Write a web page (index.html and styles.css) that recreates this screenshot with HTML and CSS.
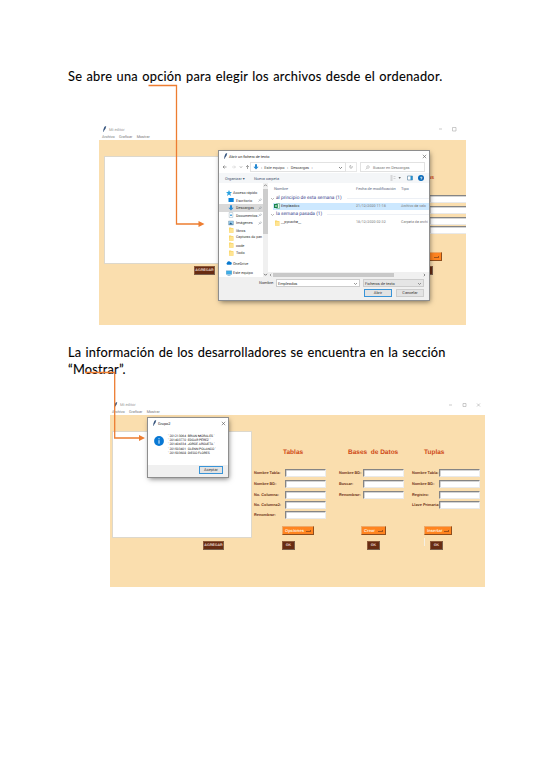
FILE: index.html
```html
<!DOCTYPE html>
<html lang="es">
<head>
<meta charset="utf-8">
<title>Manual de usuario</title>
<link rel="stylesheet" href="styles.css">
</head>
<body>
<svg width="0" height="0" class="defs">
<symbol id="feather" viewBox="0 0 5 7"><path d="M1 7 1.2 4 2.5 1 4.5 0 3.8 3 2 5.5 1.4 7Z" fill="#35537c"/></symbol>
<symbol id="pin" viewBox="0 0 5 5"><path d="M.6 4.5 2 3M1.4 2.2l1.5 1.5M2 2.3 3.3 1l1 1L3 3.3" fill="none" stroke="#78838e" stroke-width=".6"/></symbol>
<symbol id="folder" viewBox="0 0 6 6"><path d="M1 .4h2l.5.6H5.400v4.700H1Z" fill="#f9d66b"/><path d="M1.8 1.8H5.400v3.900H1Z" fill="#ffe492"/></symbol>
<symbol id="down" viewBox="0 0 6 6"><path d="M2 .3h2v2.400h1.600L3 5.600.4 2.700H2Z" fill="#2589d2"/></symbol>
</svg>
<main class="page">
<p class="lead one">Se abre una opción para elegir los archivos desde el ordenador.</p>

<section class="win first">
<header class="bar"><svg class="fe"><use href="#feather"/></svg><span class="name">Mi editor</span><span class="ctl"><svg viewBox="0 0 32 6"><path d="M0 3h3M13.500 1.500h3.500v3.500h-3.500Z" fill="none" stroke="#aaa" stroke-width=".6"/></svg></span></header>
<nav class="menu"><span>Archivo</span><span>Graficar</span><span>Mostrar</span></nav>
<div class="canvas">
<div class="left"><div class="editor"></div><b class="dark agregar">AGREGAR</b></div>
<div class="peek"><b class="head">as</b><i class="field"></i><i class="field"></i><i class="field"></i><i class="field"></i><b class="drop"><span></span><i></i></b><b class="dark"></b></div>
</div>
<div class="dialog open">
<header class="dtitle"><svg class="fe"><use href="#feather"/></svg><span>Abrir un fichero de texto</span><svg class="x" viewBox="0 0 5 5"><path d="m.8.8 3.400 3.400m0-3.400L.8 4.200" stroke="#555" stroke-width=".6"/></svg></header>
<div class="address">
<svg class="arrows" viewBox="0 0 29 8"><g fill="none" stroke="#666" stroke-width=".6"><path d="M5.500 4H2m1.500-1.500L2 4l1.500 1.500"/><path stroke="#ccc" d="M11 4h3.500M13 2.500 14.500 4 13 5.500"/><path d="m19 3.500 1 1 1-1M26.500 6V2.500M25 4l1.500-1.500L28 4"/></g></svg>
<div class="path"><svg class="ic"><use href="#down"/></svg><span class="sep">›</span><span class="p1">Este equipo</span><span class="sep wide">›</span><span class="p2">Descargas</span><span class="sep wide">›</span><svg class="chev" viewBox="0 0 5 5"><path d="m1 2 1.500 1.500L4 2" fill="none" stroke="#555" stroke-width=".7"/></svg></div>
<div class="refresh"><svg viewBox="0 0 5 5"><path d="M3.500 1.200A1.600 1.600 0 1 1 1.500 1.200M1 .7h1v1" fill="none" stroke="#555" stroke-width=".5"/></svg></div>
<div class="search"><svg viewBox="0 0 5 5"><circle cx="3" cy="2" r="1.300" fill="none" stroke="#888" stroke-width=".4"/><path d="M2 3 .7 4.400" stroke="#888" stroke-width=".4"/></svg><span>Buscar en Descargas</span></div>
</div>
<div class="tools"><span class="org">Organizar ▾</span><span class="new">Nueva carpeta</span><svg viewBox="0 0 40 8"><path d="M1.500 2h2M1.500 4h2M1.500 6h2" stroke="#aaa" stroke-width=".8"/><path d="M4.500 2.500h2M4.500 4.500h2" stroke="#ccc" stroke-width=".8"/><path d="m9.500 3.300 1.200 1.500 1.200-1.500Z" fill="#444"/><path d="M18.500 2h5v4h-5Z" fill="#fff" stroke="#668ba8" stroke-width=".7"/><path d="M21.500 2h2v4h-2Z" fill="#2790ce"/><circle cx="32" cy="4" r="3" fill="#0868b8"/><text x="32" y="5.700" class="q">?</text></svg></div>
<div class="browse">
<ul class="tree">
<li class="top"><svg viewBox="0 0 6 6"><path d="m3 0 .9 2H6L4.300 3.400 5 6 3 4.500 1 6l.7-2.600L0 2h2.100Z" fill="#29a1e0"/></svg><span>Acceso rápido</span></li>
<li><svg viewBox="0 0 6 6"><path d="M.5 1h5.200v4H.5Z" fill="#0a83db"/></svg><span>Escritorio</span><svg class="pin"><use href="#pin"/></svg></li>
<li class="on"><svg><use href="#down"/></svg><span>Descargas</span><svg class="pin"><use href="#pin"/></svg></li>
<li><svg viewBox="0 0 6 6"><path d="M1.200.5h3.600v5H1.200Z" fill="#fff" stroke="#9cb2bf" stroke-width=".5"/><path d="M2 2.500h2v1.500H2Z" fill="#55a8df"/></svg><span>Documentos</span><svg class="pin"><use href="#pin"/></svg></li>
<li><svg viewBox="0 0 6 6"><path d="M.5 1h5v4h-5Z" fill="#9acced" stroke="#7890a0" stroke-width=".4"/><path d="m1 4.500 1.500-2 2.500 2Z" fill="#275b84"/></svg><span>Imágenes</span><svg class="pin"><use href="#pin"/></svg></li>
<li><svg><use href="#folder"/></svg><span>libros</span></li>
<li><svg><use href="#folder"/></svg><span class="cut">Capturas de pan</span></li>
<li><svg><use href="#folder"/></svg><span>code</span></li>
<li><svg><use href="#folder"/></svg><span>Todo</span></li>
<li class="top cloud"><svg viewBox="0 0 6 6"><path d="M1.300 4.800A1.200 1.200 0 0 1 1 2.700a2 2 0 0 1 3.500-.6 1.400 1.400 0 0 1 .4 2.700Z" fill="#0879cf"/></svg><span>OneDrive</span></li>
<li class="top pc"><svg viewBox="0 0 6 6"><path d="M.2.8h5.600v3.500H.2Z" fill="#3daee9" stroke="#528fb8" stroke-width=".4"/><path d="M1.500 5.400h3" stroke="#528fb8" stroke-width=".6"/></svg><span>Este equipo</span></li>
</ul>
<div class="vscroll"><svg viewBox="0 0 5 5"><path d="m1 3.200 1.500-1.500L4 3.200" fill="none" stroke="#666" stroke-width=".7"/></svg><i></i><svg viewBox="0 0 5 5"><path d="m1 1.800 1.500 1.500L4 1.800" fill="none" stroke="#444" stroke-width=".7"/></svg></div>
<div class="files">
<div class="cols row"><span>Nombre</span><span>Fecha de modificación</span><span>Tipo</span></div>
<h4><svg viewBox="0 0 5 5"><path d="m1 2 1.500 1.500L4 2" fill="none" stroke="#777" stroke-width=".5"/></svg><span>al principio de esta semana (1)</span><i></i></h4>
<div class="row sel"><span><svg viewBox="0 0 6 6"><path d="M2.500.5h3v5h-3Z" fill="#e4f5eb" stroke="#50a575" stroke-width=".5"/><path d="M0 1h3.800v4H0Z" fill="#16834b"/><path d="m1 2 2 2m0-2L1 4" stroke="#fff" stroke-width=".5"/></svg>Empleados</span><span>21/12/2020 11:18</span><span>Archivo de valo</span></div>
<h4><svg viewBox="0 0 5 5"><path d="m1 2 1.500 1.500L4 2" fill="none" stroke="#777" stroke-width=".5"/></svg><span class="g2">la semana pasada (1)</span><i></i></h4>
<div class="row"><span><svg><use href="#folder"/></svg>__pycache__</span><span>18/12/2020 02:32</span><span>Carpeta de archi</span></div>
<div class="hscroll"><svg viewBox="0 0 4 4"><path d="M2.700.8 1.500 2l1.200 1.200" fill="none" stroke="#666" stroke-width=".6"/></svg><i></i><svg viewBox="0 0 4 4"><path d="M1.300.8 2.500 2 1.300 3.200" fill="none" stroke="#444" stroke-width=".6"/></svg></div>
</div>
</div>
<footer class="pick">
<label>Nombre:</label><div class="combo">Empleados<svg viewBox="0 0 5 5"><path d="m1 2 1.500 1.500L4 2" fill="none" stroke="#555" stroke-width=".6"/></svg></div><div class="combo gray">Ficheros de texto<svg viewBox="0 0 5 5"><path d="m1 2 1.500 1.500L4 2" fill="none" stroke="#555" stroke-width=".6"/></svg></div>
<div class="acts"><span class="btn focus">Abrir</span><span class="btn">Cancelar</span></div>
</footer>
</div>
</section>

<p class="lead two">La información de los desarrolladores se encuentra en la sección<br><span class="w2">“Mostrar”.</span></p>

<section class="win second">
<header class="bar"><svg class="fe"><use href="#feather"/></svg><span class="name">Mi editor</span><span class="ctl"><svg viewBox="0 0 32 6"><path d="M0 3h3M14 1.500h3v3h-3ZM28 1.500l3 3m0-3-3 3" fill="none" stroke="#aaa" stroke-width=".6"/></svg></span></header>
<nav class="menu"><span>Archivo</span><span>Graficar</span><span>Mostrar</span></nav>
<div class="canvas">
<div class="left"><div class="editor"></div><b class="dark agregar">AGREGAR</b></div>
<div class="form f1"><b class="head">Tablas</b>
<div class="fields"><label>Nombre Tabla:</label><i class="field"></i><label>Nombre BD:</label><i class="field"></i><label>No. Columna:</label><i class="field"></i><label>No. Columna2:</label><i class="field"></i><label>Renombrar:</label><i class="field"></i></div>
<b class="drop"><span>Opciones</span><i></i></b><b class="dark ok">OK</b></div>
<div class="form f2"><b class="head">Bases &nbsp;de Datos</b>
<div class="fields"><label>Nombre BD:</label><i class="field"></i><label>Buscar:</label><i class="field"></i><label>Renombrar:</label><i class="field"></i></div>
<b class="drop"><span>Crear</span><i></i></b><b class="dark ok">OK</b></div>
<div class="form f3"><b class="head">Tuplas</b>
<div class="fields"><label>Nombre Tabla:</label><i class="field"></i><label>Nombre BD:</label><i class="field"></i><label>Registro:</label><i class="field"></i><label>Llave Primaria:</label><i class="field"></i></div>
<b class="drop"><span>Insertar</span><i></i></b><div class="end"><i></i><b class="dark ok">OK</b></div></div>
</div>
<div class="dialog about">
<header class="dtitle"><svg class="fe"><use href="#feather"/></svg><span>Grupo2</span><svg class="x" viewBox="0 0 5 5"><path d="m.8.8 3.400 3.400m0-3.400L.8 4.200" stroke="#555" stroke-width=".6"/></svg></header>
<div class="msg"><svg viewBox="0 0 10 10"><circle cx="5" cy="5" r="4.900" fill="#0878d4"/><path d="M5 4.200v3.500M5 2.200v1.100" stroke="#fff" stroke-width=".9"/></svg>
<div class="people"><span>' 201213064 &nbsp;BRIAN MORALES '</span><span>' 201403770 &nbsp;EDGAR PÉREZ '</span><span>' 201404334 &nbsp;JORGE ARGUETA '</span><span>' 201503401 &nbsp;GLENN POLANCO '</span><span>' 201503608 &nbsp;DIEGO FLORES</span></div></div>
<footer><span class="btn focus">Aceptar</span></footer>
</div>
</section>
<svg class="callouts" viewBox="0 0 560 767"><g fill="none" stroke="#ed7d31" stroke-width="1.300"><path d="M148.500 85.500H176.500V224H200M85 372.500H114.700V438H140"/></g><path d="M198.500 221 204.500 224 198.500 227ZM139 435 145 438 139 441Z" fill="#ed7d31"/></svg>
</main>
</body>
</html>
```

FILE: styles.css
```css
* { box-sizing: border-box; }
body { margin: 0; background: #fff; }
.defs { position: absolute; }
.page { position: relative; width: 560px; height: 767px; padding-top: 66px; overflow: hidden; font: 4px/5px Roboto, sans-serif; color: #333; text-rendering: geometricPrecision; }
.page span, label { white-space: nowrap; }
.lead { margin: 0 0 0 68px; font: 12.800px/17px Lato, sans-serif; color: #000; white-space: nowrap; text-rendering: auto; -webkit-text-stroke: .1px #000; }
.one { height: 59px; padding-top: 2px; letter-spacing: .25px; word-spacing: .800px; }
.two { height: 76px; padding-top: 19px; letter-spacing: .2px; word-spacing: .700px; }
.callouts { position: absolute; inset: 0; width: 560px; height: 767px; }

.win { position: relative; display: flex; flex-direction: column; }
.first { margin-left: 99px; width: 367px; height: 200px; }
.second { margin-left: 110px; width: 375px; height: 186px; }
.bar { display: flex; align-items: center; height: 8px; padding-left: 3px; color: #999; }
.second .bar { height: 7px; }
.fe { width: 5px; height: 6px; margin-right: 2px; flex: none; }
.ctl { margin-left: auto; width: 32px; height: 6px; display: flex; }
.first .ctl { margin-right: -5px; }
.ctl svg { width: 32px; height: 6px; }
.second .ctl { margin-right: 4px; }
.menu { display: flex; gap: 4.300px; height: 7px; padding-left: 3px; line-height: 7px; color: #777; font-size: 3.800px; }
.second .menu { padding-left: 2px; }
.canvas { display: flex; flex: 1; min-height: 0; background: #fadeae; }
.left { width: 142px; display: flex; flex-direction: column; }
.first .left { width: 330px; padding-left: 5px; }
.second .left { padding-left: 2px; }
.editor { background: #fff; border: 1px solid #ddd8cc; flex: none; }
.first .editor { width: 142px; height: 108px; margin-top: 16px; }
.second .editor { width: 140px; height: 107px; margin-top: 16px; }
.dark { display: block; height: 9px; width: 21px; background: #682c12; border: 1px solid; border-color: #8e5a39 #79604d #79604d #8e5a39; color: #ead9d0; font: bold 3.600px/7px "Liberation Sans", sans-serif; text-align: center; }
.first .agregar { margin: 2px 0 0 90px; }
.second .agregar { margin: 3px 0 0 91px; }
.head { display: block; color: #cf4a16; font: bold 6.500px/8px "Liberation Sans", sans-serif; white-space: nowrap; }
.field { display: block; width: 41px; height: 8px; background: #fff; border: 1px solid; border-width: 1px; border-color: #858585 #eee #e9e9e9 #858585; box-shadow: inset .5px .5px 0 #aaa; }
.drop { display: flex; align-items: center; justify-content: space-between; height: 9px; background: #ff8420; border: 1px solid; border-color: #edaa6a #8e4e1e #8e4e1e #edaa6a; padding: 0 2px; color: #ffecd8; font: bold 4.200px/7px "Liberation Sans", sans-serif; }
.drop i { width: 5px; height: 2px; border: 1px solid #a3551a; border-width: 0 1px 1px 0; }
.peek { display: flex; flex-direction: column; width: 37px; overflow: hidden; }
.peek .head { margin: 34px 0 13px; height: 8px; font-size: 5.500px; margin-left: -1px; }
.peek .field { width: 43px; flex: none; margin-bottom: 3px; height: 8px; }
.peek .field:nth-of-type(4) { margin-top: -2px; }
.peek .drop { width: 13px; margin-top: 15px; }
.peek .dark { width: 4px; margin-top: 5px; }

.form { padding-top: 34px; }
.f1 { width: 85px; padding-left: 2px; }
.f2 { width: 73px; padding-left: 2px; }
.f3 { width: 75px; padding-left: 2px; }
.fields { display: grid; align-content: start; grid-template-columns: 31px 41px; grid-template-rows: 11px 11px 10px 9.500px 9px; height: 57px; margin-top: 12px; }
.fields label { color: #6e3316; font: bold 3.850px/8px "Liberation Sans", sans-serif; }
.f1 .head { padding-left: 29px; }
.f2 .head { padding-left: 9px; }
.f3 .head { padding-left: 12px; }
.f2 .fields { grid-template-columns: 24px 41px; }
.f3 .fields { grid-template-columns: 27px 41px; }
.f1 .drop { width: 32px; margin-left: 28px; }
.f2 .drop { width: 25px; margin-left: 22px; }
.f3 .drop { width: 28px; margin-left: 12px; }
.ok { width: 13px; margin-top: 6px; }
.f1 .ok { margin-left: 28px; }
.f2 .ok { margin-left: 28px; }
.end { display: flex; padding-left: 12px; }
.end i { width: 1px; height: 8px; margin-top: 3px; background: #f4efe4; }
.end .ok { margin-left: 5px; }

.dialog { position: absolute; background: #fff; outline: .5px solid #8e8e8e; box-shadow: 1px 2px 5px rgba(0,0,0,.5); display: flex; flex-direction: column; }
.open { left: 120px; top: 26px; width: 210px; height: 149px; }
.dtitle { display: flex; align-items: center; height: 10px; padding: 0 2px 0 4px; color: #222; font-size: 3.800px; flex: none; }
.dtitle .fe { margin-right: 1px; }
.x { width: 5px; height: 5px; margin-left: auto; }
.address { display: flex; height: 12px; padding: 1px 0 1px 2px; flex: none; color: #444; font-size: 3.900px; }
.arrows { width: 29px; height: 10px; }
.path { display: flex; align-items: center; width: 96px; border: .5px solid #e2e2e2; padding: 0 2px; }
.ic { width: 6px; height: 6px; }
.sep { margin: 0 2px; }
.wide { margin: 0 2.500px; }
.chev { width: 5px; height: 5px; margin-left: auto; }
.refresh { width: 11px; border: 1px solid #e8e8e8; border-left: 0; display: flex; padding: 1px 3px; }
.refresh svg { width: 5px; height: 6px; }
.search { display: flex; align-items: center; gap: 3px; width: 65px; margin-left: 3px; padding-left: 4px; border: 1px solid #e2e2e2; color: #777; }
.search svg { width: 5px; height: 5px; }
.tools { display: flex; align-items: center; height: 10px; background: #f4f6f8; padding-left: 6px; color: #45536e; font-size: 3.900px; flex: none; }
.org { width: 29px; }
.tools svg { width: 40px; height: 8px; margin-left: auto; }
.q { font-size: 4.500px; font-weight: bold; text-anchor: middle; fill: #fff; }
.browse { display: flex; height: 94px; flex: none; }
.tree { margin: 0; padding: 6px 0 0; width: 44px; list-style: none; overflow: hidden; font-size: 3.800px; }
.tree li { display: flex; align-items: center; height: 7.500px; padding-left: 9px; }
.tree svg { width: 6px; height: 6px; margin-right: 2px; flex: none; }
.tree .pin { width: 4px; height: 4px; margin: 0 1px 0 auto; }
.tree .top { padding-left: 7px; }
.tree .top svg { margin-right: 1px; }
.tree .on { background: #d9d9d9; }
.tree .cloud { margin-top: 3px; }
.tree .pc { margin-top: 2px; }
.tree .cut { font-size: 3.600px; }
.vscroll { display: flex; flex-direction: column; width: 5px; background: #f0f0f0; }
.vscroll svg { width: 5px; height: 5px; }
.vscroll svg:last-child { margin-top: auto; }
.vscroll i { display: block; height: 45px; margin-top: 1px; background: #cdcdcd; }
.files { width: 161px; overflow: hidden; display: flex; flex-direction: column; }
.row { display: grid; grid-template-columns: 82px 45px 34px; margin-left: 5px; height: 7.500px; align-items: center; flex: none; color: #777; font-size: 3.700px; }
.row span { display: flex; align-items: center; padding-left: 1px; }
.row span:first-child { color: #333; }
.row svg { width: 6px; height: 6px; margin-right: 1px; }
.cols { height: 10.500px; }
.cols span, .cols span:first-child { color: #5d6a82; font-size: 3.950px; padding-left: 1px; }
.sel { background: #cce8ff; }
.files h4 { display: flex; align-items: center; height: 9px; margin: 0 0 0 2px; font-size: 4.800px; font-weight: 400; color: #35408a; flex: none; }
.files h4 svg { width: 5px; height: 5px; margin-right: 1px; }
.files h4 i { flex: 1; height: 1px; margin-left: 5px; background: #edf0f5; }
.hscroll { display: flex; align-items: center; height: 5px; margin-top: auto; background: #f0f0f0; }
.hscroll svg { width: 5px; height: 4px; flex: none; }
.hscroll i { width: 121px; height: 4px; background: #c9c9c9; margin-right: 28px; }
.pick { display: grid; grid-template-columns: 57px 84px 61px; column-gap: 0; row-gap: 2px; align-content: start; flex: 1; background: #f0f0f0; padding-top: 2px; font-size: 3.900px; }
.pick label { text-align: right; padding-right: 2px; line-height: 8px; }
.combo { display: flex; align-items: center; justify-content: space-between; height: 8px; padding: 0 1px; background: #fff; border: 1px solid #ccc; color: #333; }
.combo svg { width: 5px; height: 5px; }
.gray { margin-left: 3px; margin-right: -3px; background: #e5e5e5; }
.acts { grid-column: 3; display: flex; gap: 4px; padding-left: 4px; }
.btn { display: block; width: 28px; height: 8px; background: #e3e3e3; border: 1px solid #cdcdcd; text-align: center; line-height: 6px; color: #333; flex: none; }
.focus { border-color: #3894d8; }
.about { left: 38px; top: 17px; width: 80px; height: 59px; }
.msg { display: flex; height: 37px; padding: 6px 0 0 6px; }
.msg > svg { width: 10px; height: 10px; flex: none; margin-top: 2px; }
.people { display: flex; flex-direction: column; font-size: 3.300px; line-height: 4.200px; margin-left: 4px; color: #111; }
.about footer { height: 12px; background: #f0f0f0; padding-top: 1px; }
.about .btn { width: 24px; margin-left: 51px; }
```
